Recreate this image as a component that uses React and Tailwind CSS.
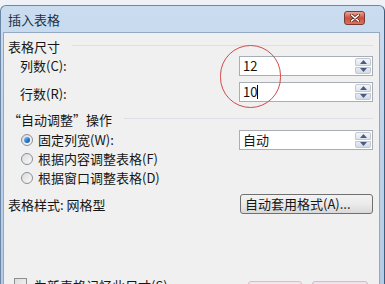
function CloseBtn() {
  return (
    <div className="mt-[5px] mr-[15px] w-[21px] h-[14px] rounded-[3px] border border-[#7a3a33] bg-gradient-to-b from-[#eba495] via-[#c9503c] to-[#d9745a] flex items-center justify-center">
      <svg width="10" height="8" viewBox="0 0 10 8">
        <path d="M1.5 1 L8.5 7 M8.5 1 L1.5 7" stroke="#5a2a25" strokeWidth="3" strokeLinecap="round" />
        <path d="M1.5 1 L8.5 7 M8.5 1 L1.5 7" stroke="#ffffff" strokeWidth="1.6" strokeLinecap="round" />
      </svg>
    </div>
  );
}

function Spinner() {
  return (
    <div className="ml-auto mr-[1px] w-[16px] h-[16px] flex flex-col gap-px">
      <div className="flex-1 rounded-t-[2px] border border-[#c2c8d2] bg-gradient-to-b from-[#f4f6f9] to-[#dfe5ee] flex items-center justify-center">
        <svg width="7" height="4" viewBox="0 0 7 4"><path d="M0 4 L3.5 0 L7 4 Z" fill="#4a5d80" /></svg>
      </div>
      <div className="flex-1 rounded-b-[2px] border border-[#c2c8d2] bg-gradient-to-b from-[#e6ebf2] to-[#d3dbe6] flex items-center justify-center">
        <svg width="7" height="4" viewBox="0 0 7 4"><path d="M0 0 L7 0 L3.5 4 Z" fill="#4a5d80" /></svg>
      </div>
    </div>
  );
}

function SpinBox({ value, caret }) {
  return (
    <div className="ml-auto w-[134px] h-[20px] shrink-0 border border-[#a9adb5] bg-white flex items-center">
      <span className="pl-[3px] text-[13px] leading-[16px] text-[#111]">{value}</span>
      {caret && <span className="w-px h-[14px] bg-black" />}
      <Spinner />
    </div>
  );
}

function Radio({ checked }) {
  return (
    <div className="w-[12px] h-[12px] rounded-full border border-[#8c8f94] bg-gradient-to-br from-[#d9dbde] to-[#fafafa] flex items-center justify-center shrink-0">
      {checked && <div className="w-[6px] h-[6px] rounded-full bg-gradient-to-br from-[#9bd0ff] via-[#2f7fd6] to-[#1a4f9c]" />}
    </div>
  );
}

export default function App() {
  return (
    <div className="relative w-[385px] h-[284px] overflow-hidden bg-[#eef1f5] pt-[5px] text-[13px] leading-[18px] text-[#161616] font-['Noto_Sans_CJK_SC',sans-serif]">
      <div className="h-[300px] rounded-t-[6px] border border-[#6b86a6] border-r-[#3e5c7c] bg-gradient-to-b from-[#cadcef] via-[#bdd2ea] to-[#b3cae4] pl-[2px] pr-[4px] flex flex-col">
        <div className="h-[26px] shrink-0 flex items-start justify-between">
          <span className="ml-[5px] mt-[5px] text-[#22303f]">插入表格</span>
          <CloseBtn />
        </div>
        <div className="flex-1 bg-[#f0f0f0] border border-[#93a9c3] pl-[4px] pr-[6px] pt-[5px] flex flex-col">
          {/* 表格尺寸 */}
          <div className="h-[18px] flex items-center">
            <span>表格尺寸</span>
            <div className="ml-[12px] flex-1 h-px bg-[#dcdfe3] -mt-[3px]" />
          </div>
          <div className="h-[20px] flex items-center pl-[12px]">
            <span>列数(C):</span>
            <SpinBox value="12" />
          </div>
          <div className="mt-[6px] h-[20px] flex items-center pl-[12px]">
            <span className="mt-[3px]">行数(R):</span>
            <SpinBox value="10" caret />
          </div>
          {/* 自动调整 */}
          <div className="mt-[9px] h-[18px] flex items-center">
            <span>“自动调整”操作</span>
            <div className="ml-[12px] flex-1 h-px bg-[#dcdfe3] -mt-[3px]" />
          </div>
          <div className="mt-px h-[20px] flex items-center pl-[13px]">
            <Radio checked />
            <span className="ml-[5px]">固定列宽(W):</span>
            <div className="ml-auto w-[134px] h-[20px] shrink-0 border border-[#a9adb5] bg-white flex items-center">
              <span className="pl-[3px]">自动</span>
              <Spinner />
            </div>
          </div>
          <div className="h-[18px] flex items-center pl-[13px]">
            <Radio />
            <span className="ml-[5px]">根据内容调整表格(F)</span>
          </div>
          <div className="mt-px h-[18px] flex items-center pl-[13px]">
            <Radio />
            <span className="ml-[5px]">根据窗口调整表格(D)</span>
          </div>
          <div className="mt-[7px] h-[20px] flex items-center">
            <span className="mt-[1px]">表格样式: 网格型</span>
            <div className="ml-auto w-[133px] h-[20px] shrink-0 rounded-[3px] border border-[#707070] bg-gradient-to-b from-[#f3f3f3] via-[#ebebeb] to-[#d9d9d9] flex items-center pl-[4px]">
              <span>自动套用格式(A)...</span>
            </div>
          </div>
          <div className="mt-[63px] h-[22px] flex items-start">
            <div className="ml-[6px] mt-[1px] w-[13px] h-[13px] border border-[#8e8f8f] bg-gradient-to-br from-[#dcdcdc] to-[#f7f7f7]" />
            <span className="ml-[7px]">为新表格记忆此尺寸(S)</span>
            <div className="ml-auto mt-[4px] w-[54px] h-[20px] rounded-[3px] border border-[#e2b9c8] bg-[#f5e6ec]" />
            <div className="ml-[10px] mr-[5px] mt-[4px] w-[56px] h-[20px] rounded-[3px] border border-[#d7b9cc] bg-[#f1e3ec]" />
          </div>
        </div>
      </div>
      <div className="absolute left-[220px] top-[45px] w-[61px] h-[63px] rounded-full border-[1.5px] border-[#d24a4a]" />
    </div>
  );
}
